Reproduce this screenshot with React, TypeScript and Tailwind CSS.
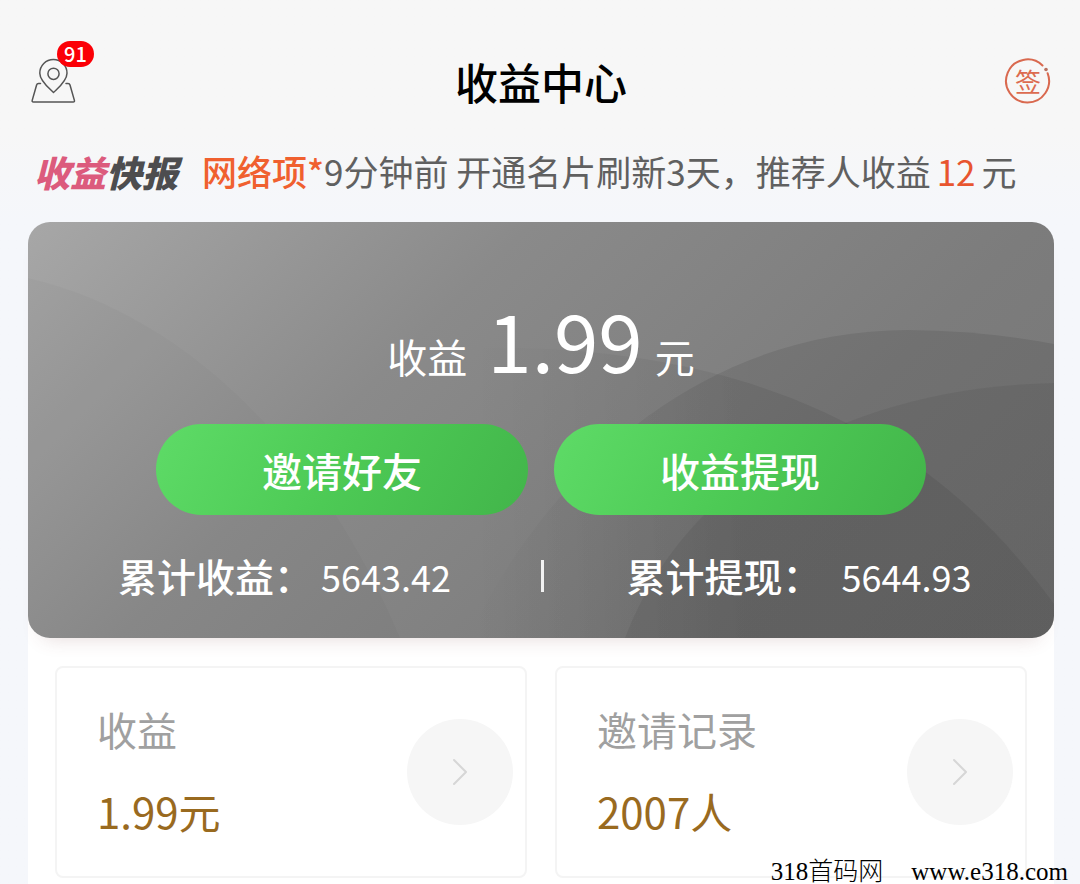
import { ChevronRight } from "lucide-react";

const totals = [
  { label: "累计收益：", value: "5643.42", className: "gap-2" },
  { label: "累计提现：", value: "5644.93", className: "gap-5" },
];

const entries = [
  { title: "收益", value: "1.99元" },
  { title: "邀请记录", value: "2007人" },
];

function LocationButton() {
  return (
    <button type="button" aria-label="位置" className="relative h-12 w-12">
      <svg
        viewBox="0 0 48 48"
        className="h-12 w-12"
        fill="none"
        stroke="#555555"
        strokeWidth="1.5"
        strokeLinecap="round"
        strokeLinejoin="round"
      >
        <path d="M10.5 26.5H8.5Q7 26.5 6.6 28L2.2 43.4Q1.8 45 3.4 45H43.2Q44.8 45 44.4 43.4L40 28Q39.6 26.5 38 26.5H36" />
        <path d="M23.5 35.5C19 31 9.8 24 9.8 16.2A13.6 13.6 0 0 1 37 16.2C37 24 28 31 23.5 35.5Z" />
        <circle cx="23.5" cy="16.8" r="5.6" />
      </svg>
      <span className="absolute -top-4 left-[27px] flex h-[26px] w-[37px] items-center justify-center rounded-full bg-[#fb0007] text-xl leading-5 font-medium text-white">
        91
      </span>
    </button>
  );
}

function SignButton() {
  return (
    <button
      type="button"
      className="relative flex h-12 w-12 items-center justify-center text-[26px] leading-none text-[#dc6b50]"
    >
      <svg viewBox="0 0 48 48" className="absolute inset-0" fill="none">
        <path
          d="M38.5 8.5A21.5 21.5 0 1 0 43.6 16.2"
          stroke="#d9694f"
          strokeWidth="2"
          strokeLinecap="round"
        />
        <circle cx="42" cy="12.5" r="1.8" fill="#b9705f" />
      </svg>
      签
    </button>
  );
}

function CardArcs() {
  return (
    <svg
      viewBox="0 0 1026 416"
      preserveAspectRatio="none"
      className="absolute inset-0 h-full w-full"
    >
      <defs>
        <linearGradient
          id="arc-fade"
          gradientUnits="userSpaceOnUse"
          x1="440"
          y1="0"
          x2="720"
          y2="0"
        >
          <stop offset="0" stopColor="#000" stopOpacity="0" />
          <stop offset="1" stopColor="#000" stopOpacity="1" />
        </linearGradient>
      </defs>
      <path d="M0 56C150 90 290 220 372 416H0Z" fill="#000" opacity="0.02" />
      <path
        d="M440 416C530 230 690 108 880 108Q960 109 1026 122V416Z"
        fill="url(#arc-fade)"
        opacity="0.09"
      />
      <path
        d="M440 126C730 120 910 220 1026 382V416H440Z"
        fill="url(#arc-fade)"
        opacity="0.07"
      />
      <path
        d="M597 416C660 250 830 165 1026 161V416Z"
        fill="#000"
        opacity="0.06"
      />
    </svg>
  );
}

function ActionButton({ children }: { children: string }) {
  return (
    <button
      type="button"
      className="h-[91px] max-w-[372px] flex-1 rounded-full bg-[linear-gradient(120deg,#5edb67,#4dca55_50%,#42b54a)] text-[40px] font-medium text-white"
    >
      {children}
    </button>
  );
}

function BalanceCard() {
  return (
    <section className="relative z-10 overflow-hidden rounded-[22px] bg-[linear-gradient(135deg,#a7a7a7_0%,#8a8a8a_35%,#7c7c7c_70%,#767676_100%)] pt-[76px] pb-[42px] text-white shadow-[0_14px_20px_-14px_rgba(120,60,60,0.20)]">
      <CardArcs />
      <div className="relative">
        <p className="flex items-baseline justify-center gap-3 leading-[80px]">
          <span className="text-[40px] leading-10">收益</span>
          <span className="pl-2 text-[80px]">1.99</span>
          <span className="text-[40px] leading-10">元</span>
        </p>
        <div className="mt-[46px] flex justify-center gap-[26px]">
          <ActionButton>邀请好友</ActionButton>
          <ActionButton>收益提现</ActionButton>
        </div>
        <div className="mt-10 flex items-center leading-10">
          {totals.map((item, index) => (
            <div key={item.label} className="flex flex-1 items-center">
              {index > 0 && <span className="h-8 w-[3px] bg-white/90" />}
              <p
                className={`flex flex-1 items-baseline justify-center ${item.className}`}
              >
                <span className="text-[39px] font-medium">{item.label}</span>
                <span className="text-[36px]">{item.value}</span>
              </p>
            </div>
          ))}
        </div>
      </div>
    </section>
  );
}

function EntryCard({ title, value }: { title: string; value: string }) {
  return (
    <a
      href="#"
      className="flex h-[212px] items-center justify-between rounded-lg border-2 border-[#f4f4f4] bg-white pr-3 pl-10"
    >
      <span className="flex flex-col gap-[42px] pb-1 leading-10">
        <span className="text-[40px] text-[#a0a0a0]">{title}</span>
        <span className="text-[42px] text-[#996a1f]">{value}</span>
      </span>
      <span className="flex h-[106px] w-[106px] items-center justify-center rounded-full bg-[#f6f6f6] text-[#d6d6d6]">
        <ChevronRight size={48} strokeWidth={1} />
      </span>
    </a>
  );
}

export default function App() {
  return (
    <div className="relative flex min-h-screen flex-col bg-linear-to-b from-[#f7f7f7] from-15% to-[#f5f7fb] to-25% font-['Noto_Sans_CJK_SC',sans-serif]">
      <header className="flex items-center justify-between pt-[57px] pr-7 pl-[30px]">
        <LocationButton />
        <h1 className="text-[43px] leading-[48px] font-medium text-black">
          收益中心
        </h1>
        <SignButton />
      </header>

      <div className="flex items-center gap-6 pt-[46px] pb-[31px] pl-[34px] leading-10 whitespace-nowrap">
        <h2 className="text-[36px] font-black text-[#4d4d4f] italic">
          <span className="text-[#dc5b7d]">收益</span>快报
        </h2>
        <p className="text-[35px] text-[#606060]">
          <span className="font-medium text-[#f0602f]">网络项*</span>9分钟前
          开通名片刷新3天，推荐人收益
          <span className="mx-[6px] text-[#e8552f]">12</span>元
        </p>
      </div>

      <main className="flex flex-1 flex-col pr-[26px] pl-7">
        <BalanceCard />
        <div className="-mt-6 grid flex-1 grid-cols-2 content-start gap-7 bg-white px-[27px] pt-[52px]">
          {entries.map((entry) => (
            <EntryCard key={entry.title} {...entry} />
          ))}
        </div>
      </main>

      <footer className="absolute right-3 bottom-0 flex gap-7 font-['Liberation_Serif','Noto_Sans_CJK_SC',serif] text-[25px] leading-6 font-light text-black">
        <span>318首码网</span>
        <span>www.e318.com</span>
      </footer>
    </div>
  );
}
